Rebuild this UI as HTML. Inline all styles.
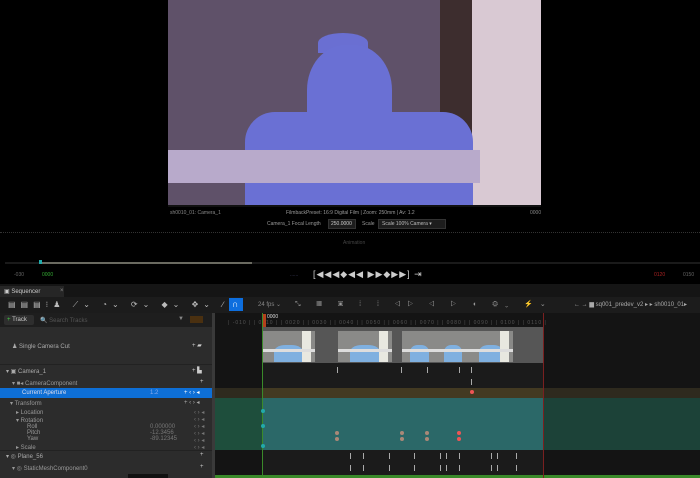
<!DOCTYPE html>
<html><head><meta charset="utf-8"><style>
*{margin:0;padding:0;box-sizing:border-box}
body{width:700px;height:478px;background:#000;position:relative;overflow:hidden;font-family:"Liberation Sans",sans-serif;font-size:6px;color:#aaa}
.a{position:absolute}
.t{position:absolute;white-space:nowrap;font-size:6px;color:#bbb}
.thumb{position:absolute;top:331px;height:31px;background:#8a8a88;overflow:hidden}
.thumb .w{position:absolute;right:4px;top:0;width:9px;height:100%;background:#e8e8e0}
.thumb .f{position:absolute;left:22%;bottom:0;width:55%;height:55%;background:#7fb0e0;border-radius:40% 40% 0 0}
.thumb .bar{position:absolute;left:0;right:0;top:18px;height:3px;background:#ddd}
.tick{position:absolute;width:1px;height:6px;background:#aaa}
.kf{position:absolute;width:4px;height:4px;border-radius:50%}
</style></head><body>
<div class="a" style="left:168px;top:0;width:373px;height:205px;background:#5f5169"></div>
<div class="a" style="left:440px;top:0;width:32px;height:205px;background:#3d2d2e"></div>
<div class="a" style="left:472px;top:0;width:69px;height:205px;background:#d9c9d3"></div>
<div class="a" style="left:318px;top:33px;width:50px;height:20px;background:#6a6fd2;border-radius:50% 50% 0 0"></div>
<div class="a" style="left:307px;top:45px;width:85px;height:100px;background:#6a70d4;border-radius:45% 45% 20% 20%"></div>
<div class="a" style="left:245px;top:112px;width:228px;height:93px;background:#6a70d4;border-radius:30px 30px 0 0"></div>
<div class="a" style="left:168px;top:150px;width:312px;height:33px;background:#b8aacb"></div>
<div class="a" style="left:168px;top:205px;width:373px;height:2px;background:#111"></div>
<div class="t" style="left:170px;top:210px;color:#888;font-size:5px">sh0010_01: Camera_1</div>
<div class="t" style="left:286px;top:210px;color:#999;font-size:5px">FilmbackPreset: 16:9 Digital Film | Zoom: 250mm | Av: 1.2</div>
<div class="t" style="left:530px;top:210px;color:#888;font-size:5px">0000</div>
<div class="t" style="left:267px;top:221px;color:#999;font-size:5px">Camera_1 Focal Length</div>
<div class="a" style="left:328px;top:219px;width:28px;height:10px;background:#1d1d1d;border:1px solid #333"></div>
<div class="t" style="left:331px;top:221px;color:#ccc;font-size:5px">250.0000</div>
<div class="t" style="left:362px;top:221px;color:#999;font-size:5px">Scale</div>
<div class="a" style="left:378px;top:219px;width:68px;height:10px;background:#1d1d1d;border:1px solid #333"></div>
<div class="t" style="left:382px;top:221px;color:#bbb;font-size:5px">Scale 100% Camera ▾</div>
<div class="a" style="left:0;top:232px;width:700px;border-top:1px dotted #333"></div>
<div class="t" style="left:343px;top:240px;color:#444;font-size:5px">Animation</div>
<div class="a" style="left:5px;top:262px;width:695px;height:2px;background:#1a1a1a"></div>
<div class="a" style="left:40px;top:262px;width:212px;height:2px;background:#6a6a60"></div>
<div class="a" style="left:39px;top:260px;width:3px;height:4px;background:#2aa"></div>
<div class="t" style="left:14px;top:272px;color:#666;font-size:5px">-030</div>
<div class="t" style="left:42px;top:272px;color:#3a3;font-size:5px">0000</div>
<div class="t" style="left:290px;top:272px;color:#446;font-size:5px">......</div>
<div class="t" style="left:313px;top:269px;color:#ccc;font-size:9px;letter-spacing:1px">[◀◀◀◆◀◀ ▶▶◆▶▶] ⇥</div>
<div class="t" style="left:654px;top:272px;color:#a22;font-size:5px">0120</div>
<div class="t" style="left:683px;top:272px;color:#666;font-size:5px">0150</div>
<div class="a" style="left:0;top:284px;width:700px;height:194px;background:#151515"></div>
<div class="a" style="left:0;top:286px;width:64px;height:11px;background:#262626"></div>
<div class="t" style="left:4px;top:288px;color:#ccc">▣ Sequencer</div>
<div class="t" style="left:60px;top:288px;color:#888">×</div>
<div class="a" style="left:0;top:297px;width:700px;height:16px;background:#1c1c1c"></div>
<div class="t" style="left:8px;top:300px;color:#bbb;font-size:8px;letter-spacing:5px">▤▤▤⁝♟ ⟋⌄ ◔⌄ ⟳⌄ ◆⌄ ✥⌄ ∕⌄</div>
<div class="a" style="left:229px;top:298px;width:14px;height:13px;background:#0d6ede"></div>
<div class="t" style="left:232px;top:299px;color:#fff;font-size:9px">∩</div>
<div class="t" style="left:258px;top:301px;color:#888">24 fps ⌄</div>
<div class="t" style="left:295px;top:300px;color:#999;font-size:7px;letter-spacing:7px">⤡ ▦ ▣ ⁞ ⁞ ◁▷ ◁ ▷ ◖ ⚙⌄ ⚡⌄</div>
<div class="t" style="left:574px;top:301px;color:#aaa">← →  ▆ sq001_predev_v2 ▸  ▸ sh0010_01▸</div>
<div class="a" style="left:0;top:313px;width:214px;height:14px;background:#1e1e1e"></div>
<div class="a" style="left:4px;top:315px;width:30px;height:10px;background:#2e2e2e;border-radius:2px"></div>
<div class="t" style="left:7px;top:317px;color:#ccc"><span style="color:#4c4">+</span> Track</div>
<div class="t" style="left:40px;top:317px;color:#555">🔍 Search Tracks</div>
<div class="t" style="left:178px;top:316px;color:#888">▼</div>
<div class="a" style="left:190px;top:316px;width:13px;height:7px;background:#4a3010"></div>
<div class="a" style="left:0;top:327px;width:212px;height:151px;background:#2c2c2c"></div>
<div class="a" style="left:212px;top:313px;width:3px;height:165px;background:#3a3a3a"></div>
<div class="t" style="left:12px;top:343px;color:#aaa">♟ Single Camera Cut</div>
<div class="t" style="left:192px;top:342px;color:#ccc">+ ▰</div>
<div class="a" style="left:0;top:364px;width:212px;height:1px;background:#222"></div>
<div class="t" style="left:6px;top:368px;color:#aaa">▾ ▣ Camera_1</div>
<div class="t" style="left:192px;top:367px;color:#ccc">+ ▙</div>
<div class="t" style="left:12px;top:380px;color:#999">▾ ■◂ CameraComponent</div>
<div class="t" style="left:200px;top:379px;color:#ccc">+</div>
<div class="a" style="left:0;top:388px;width:212px;height:10px;background:#0e6fd6"></div>
<div class="t" style="left:22px;top:390px;color:#dde">Current Aperture</div>
<div class="t" style="left:150px;top:390px;color:#8ae">1.2</div>
<div class="t" style="left:184px;top:389px;color:#fff">+ ‹ › ◂</div>
<div class="t" style="left:10px;top:400px;color:#999">▾ Transform</div>
<div class="t" style="left:184px;top:399px;color:#aaa">+ ‹ › ◂</div>
<div class="t" style="left:16px;top:409px;color:#999">▸ Location</div>
<div class="t" style="left:16px;top:417px;color:#999">▾ Rotation</div>
<div class="t" style="left:27px;top:424px;color:#999">Roll</div>
<div class="t" style="left:27px;top:430px;color:#999">Pitch</div>
<div class="t" style="left:27px;top:436px;color:#999">Yaw</div>
<div class="t" style="left:150px;top:424px;color:#777">0.000000</div>
<div class="t" style="left:150px;top:430px;color:#777">-12.3456</div>
<div class="t" style="left:150px;top:436px;color:#777">-89.12345</div>
<div class="t" style="left:16px;top:444px;color:#999">▸ Scale</div>
<div class="t" style="left:194px;top:409px;color:#777">‹ › ◂<br>‹ › ◂<br>‹ › ◂<br>‹ › ◂<br>‹ › ◂<br>‹ › ◂</div>
<div class="a" style="left:0;top:450px;width:212px;height:1px;background:#222"></div>
<div class="t" style="left:6px;top:453px;color:#aaa">▾ ◎ Plane_56</div>
<div class="t" style="left:200px;top:452px;color:#ccc">+</div>
<div class="t" style="left:12px;top:465px;color:#999">▾ ◎ StaticMeshComponent0</div>
<div class="t" style="left:200px;top:464px;color:#ccc">+</div>
<div class="a" style="left:128px;top:474px;width:40px;height:4px;background:#111"></div>
<div class="a" style="left:215px;top:313px;width:485px;height:14px;background:#141414"></div>
<div class="t" style="left:228px;top:320px;color:#555;font-size:5px;letter-spacing:1px">| -010 |  | 0010 |  | 0020 |  | 0030 |  | 0040 |  | 0050 |  | 0060 |  | 0070 |  | 0080 |  | 0090 |  | 0100 |  | 0110 |</div>
<div class="a" style="left:262px;top:314px;width:4px;height:13px;background:#b4401c"></div>
<div class="t" style="left:267px;top:314px;color:#ddd;font-size:5px">0000</div>
<div class="a" style="left:215px;top:327px;width:485px;height:151px;background:#141414"></div>
<div class="a" style="left:262px;top:327px;width:281px;height:36px;background:#565656"></div>
<div class="thumb" style="left:263px;width:52px"><div class="f"></div><div class="w"></div><div class="bar"></div></div>
<div class="thumb" style="left:338px;width:54px"><div class="f"></div><div class="w"></div><div class="bar"></div></div>
<div class="thumb" style="left:402px;width:35px"><div class="f"></div><div class="bar"></div></div>
<div class="thumb" style="left:437px;width:33px"><div class="f"></div><div class="bar"></div></div>
<div class="thumb" style="left:470px;width:43px"><div class="f"></div><div class="w"></div><div class="bar"></div></div>
<div class="a" style="left:262px;top:363px;width:281px;height:25px;background:#1b1b1b"></div>
<div class="a" style="left:215px;top:388px;width:485px;height:10px;background:#2e2a1e"></div>
<div class="a" style="left:262px;top:388px;width:281px;height:10px;background:#433a22"></div>
<div class="a" style="left:215px;top:398px;width:485px;height:52px;background:#1c4238"></div>
<div class="a" style="left:262px;top:398px;width:281px;height:52px;background:#2b6868"></div>
<div class="a" style="left:215px;top:398px;width:47px;height:52px;background:#1e4e3c"></div>
<div class="a" style="left:262px;top:450px;width:281px;height:25px;background:#1b1b1b"></div>
<div class="a" style="left:215px;top:475px;width:485px;height:3px;background:#3a8a2a"></div>
<div class="a" style="left:262px;top:313px;width:1px;height:165px;background:#3a8a2a"></div>
<div class="a" style="left:543px;top:313px;width:1px;height:165px;background:#7a2020"></div>
<div class="tick" style="left:337px;top:367px"></div><div class="tick" style="left:401px;top:367px"></div><div class="tick" style="left:427px;top:367px"></div><div class="tick" style="left:459px;top:367px"></div><div class="tick" style="left:471px;top:367px"></div><div class="tick" style="left:471px;top:379px"></div>
<div class="kf" style="left:470px;top:390px;background:#e55"></div>
<div class="kf" style="left:335px;top:431px;background:#a87"></div><div class="kf" style="left:335px;top:437px;background:#a87"></div>
<div class="kf" style="left:400px;top:431px;background:#a87"></div><div class="kf" style="left:400px;top:437px;background:#a87"></div>
<div class="kf" style="left:425px;top:431px;background:#a87"></div><div class="kf" style="left:425px;top:437px;background:#a87"></div>
<div class="kf" style="left:457px;top:431px;background:#e55"></div><div class="kf" style="left:457px;top:437px;background:#e55"></div>
<div class="kf" style="left:261px;top:409px;background:#2aa"></div><div class="kf" style="left:261px;top:424px;background:#2aa"></div><div class="kf" style="left:261px;top:444px;background:#2aa"></div>
<div class="tick" style="left:350px;top:453px"></div><div class="tick" style="left:363px;top:453px"></div><div class="tick" style="left:389px;top:453px"></div><div class="tick" style="left:414px;top:453px"></div><div class="tick" style="left:440px;top:453px"></div><div class="tick" style="left:446px;top:453px"></div><div class="tick" style="left:459px;top:453px"></div><div class="tick" style="left:491px;top:453px"></div><div class="tick" style="left:497px;top:453px"></div><div class="tick" style="left:516px;top:453px"></div>
<div class="tick" style="left:350px;top:465px"></div><div class="tick" style="left:363px;top:465px"></div><div class="tick" style="left:389px;top:465px"></div><div class="tick" style="left:414px;top:465px"></div><div class="tick" style="left:440px;top:465px"></div><div class="tick" style="left:446px;top:465px"></div><div class="tick" style="left:459px;top:465px"></div><div class="tick" style="left:491px;top:465px"></div><div class="tick" style="left:497px;top:465px"></div><div class="tick" style="left:516px;top:465px"></div>
</body></html>
